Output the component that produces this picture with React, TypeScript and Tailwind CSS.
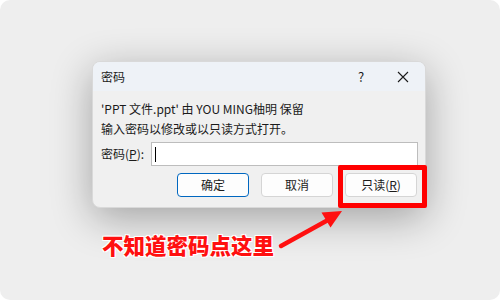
import React from "react";

const ui = { fontFamily: '"Noto Sans CJK SC", "Noto Sans", sans-serif' };

const Btn = ({ children, primary }: { children: React.ReactNode; primary?: boolean }) => (
  <button
    className={`w-[72px] h-[24px] rounded-[4px] bg-[#fdfdfd] text-[12px] text-[#1b1b1b] flex items-center justify-center ${
      primary ? "border border-[#0067c0]" : "border border-[#d5d5d5]"
    }`}
  >
    {children}
  </button>
);

export default function App() {
  return (
    <div className="w-[500px] h-[300px] bg-white" style={ui}>
      <div className="relative w-full h-full rounded-[10px] bg-[#eeeeee] overflow-hidden pt-[61px] pl-[92px]">
        {/* Dialog */}
        <div className="w-[334px] h-[147px] rounded-[8px] bg-[#f0f0f0] border border-[#d9d9d9] shadow-[0_10px_40px_rgba(0,0,0,0.32)] overflow-hidden flex flex-col">
          <div className="h-[29px] bg-[#eef2f7] flex items-center pl-[8px] pr-[14px] text-[12px] text-[#1b1b1b] shrink-0">
            <span className="flex-1">密码</span>
            <span className="w-[20px] text-center mr-[26px] text-[13px]">?</span>
            <svg width="12" height="12" viewBox="0 0 12 12" className="mr-[2px]">
              <path d="M1 1L11 11M11 1L1 11" stroke="#1b1b1b" strokeWidth="1.1" />
            </svg>
          </div>
          <div className="flex flex-col px-[8px] pt-[9px] text-[12px] text-[#1b1b1b]">
            <div className="h-[18px] leading-[18px]">'PPT 文件.ppt' 由 YOU MING柚明 保留</div>
            <div className="h-[18px] leading-[18px] mt-[2px]">输入密码以修改或以只读方式打开。</div>
            <div className="flex items-center mt-[4px]">
              <span className="w-[50px]">
                密码(<span className="underline">P</span>):
              </span>
              <div className="flex-1 h-[24px] bg-white border border-[#bdbdbd] mr-[-1px] flex items-center pl-[3px]">
                <div className="w-[1px] h-[15px] bg-black" />
              </div>
            </div>
            <div className="flex justify-end gap-[12px] mt-[7px]">
              <Btn primary>确定</Btn>
              <Btn>取消</Btn>
              <Btn>
                只读(<span className="underline">R</span>)
              </Btn>
            </div>
          </div>
        </div>

        {/* Highlight around 只读 */}
        <div className="absolute left-[338px] top-[165px] w-[89px] h-[43px] border-[5px] border-[#ff0000] rounded-[2px]" />

        {/* Arrow */}
        <svg className="absolute left-0 top-0" width="500" height="300" viewBox="0 0 500 300">
          <line x1="281" y1="246" x2="328" y2="220" stroke="#ff1010" strokeWidth="4.5" strokeLinecap="round" />
          <polygon points="342,211 330.5,227.5 321.5,212.5" fill="#ff1010" />
        </svg>

        {/* Annotation */}
        <div
          className="absolute left-[102px] top-[231px] text-[21.5px] font-black text-[#ff1010] leading-[28px] [text-shadow:0_0_2px_#fff,1px_1px_0_#fff,-1px_-1px_0_#fff,1px_-1px_0_#fff,-1px_1px_0_#fff]"
        >
          不知道密码点这里
        </div>
      </div>
    </div>
  );
}
